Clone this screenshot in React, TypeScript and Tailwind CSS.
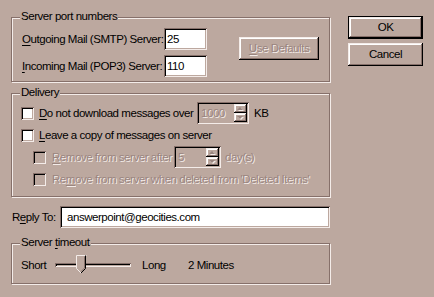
import React from 'react';

const FACE = 'bg-[#bca89f]';
const etched = 'border border-[#86706a] shadow-[inset_1px_1px_0_#f4ece9,1px_1px_0_#f4ece9]';
const sunken =
  'shadow-[inset_1px_1px_0_#86706a,inset_-1px_-1px_0_#f4ece9,inset_2px_2px_0_#000,inset_-2px_-2px_0_#bca89f]';
const raised =
  'shadow-[inset_-1px_-1px_0_#000,inset_1px_1px_0_#f4ece9,inset_-2px_-2px_0_#86706a,inset_2px_2px_0_#fff]';
const disabledText = 'text-[#9a857f] [text-shadow:1px_1px_0_#f4ece9]';

const U: React.FC<{ children: React.ReactNode }> = ({ children }) => <span className="underline underline-offset-2">{children}</span>;

const Group: React.FC<{ title: React.ReactNode; className?: string; children: React.ReactNode }> = ({
  title,
  className = '',
  children
}) => (
  <div className={`relative ${etched} ${className}`}>
    <span className={`absolute left-[8px] top-[-9px] px-[1px] leading-[15px] whitespace-nowrap ${FACE}`}>{title}</span>
    {children}
  </div>
);

const Checkbox: React.FC<{ disabled?: boolean }> = ({ disabled }) => (
  <div className={`w-[13px] h-[13px] shrink-0 ${sunken} ${disabled ? FACE : 'bg-white'}`} />
);

const Arrow: React.FC<{ up?: boolean }> = ({ up }) => (
  <svg width="7" height="4" viewBox="0 0 7 4" className="block">
    {up ? (
      <>
        <polygon points="3,0 6,3 0,3" fill="#f4ece9" transform="translate(1,1)" />
        <polygon points="3,0 6,3 0,3" fill="#9a857f" />
      </>
    ) : (
      <>
        <polygon points="0,0 6,0 3,3" fill="#f4ece9" transform="translate(1,1)" />
        <polygon points="0,0 6,0 3,3" fill="#9a857f" />
      </>
    )}
  </svg>
);

const Spin: React.FC<{ value: string; width: string }> = ({ value, width }) => (
  <div className={`relative h-[22px] ${width} ${FACE} ${sunken} flex items-center shrink-0`}>
    <span className={`pl-[4px] ${disabledText}`}>{value}</span>
    <div className="absolute right-[2px] top-[2px] flex flex-col">
      <div className={`w-[13px] h-[9px] ${FACE} ${raised} flex items-center justify-center`}>
        <Arrow up />
      </div>
      <div className={`w-[13px] h-[9px] ${FACE} ${raised} flex items-center justify-center`}>
        <Arrow />
      </div>
    </div>
  </div>
);

const Button: React.FC<{ children: React.ReactNode; isDefault?: boolean; disabled?: boolean; className?: string }> = ({
  children,
  isDefault,
  disabled,
  className = ''
}) => (
  <div
    className={`h-[23px] flex items-center justify-center ${FACE} ${raised} ${
      isDefault ? 'border border-black' : ''
    } ${disabled ? disabledText : ''} ${className}`}
  >
    {children}
  </div>
);

export default function App() {
  return (
    <div
      className={`w-[434px] h-[297px] ${FACE} text-black text-[11.5px] tracking-[-0.45px] leading-[15px] flex pl-[11px] overflow-hidden`}
      style={{ fontFamily: '"Liberation Sans", Arial, sans-serif' }}
    >
      {/* left column */}
      <div className="w-[319px] shrink-0 pt-[17px] flex flex-col">
        <Group title="Server port numbers" className="h-[65px]">
          <div className="flex pt-[10px] pl-[10px]">
            <div className="flex flex-col gap-[5px]">
              <div className="flex items-center h-[22px]">
                <span className="w-[142px] shrink-0 whitespace-nowrap"><U>O</U>utgoing Mail (SMTP) Server:</span>
                <div className={`w-[43px] h-[22px] bg-white ${sunken} flex items-center pl-[3px]`}>25</div>
              </div>
              <div className="flex items-center h-[22px]">
                <span className="w-[142px] shrink-0 whitespace-nowrap"><U>I</U>ncoming Mail (POP3) Server:</span>
                <div className={`w-[43px] h-[22px] bg-white ${sunken} flex items-center pl-[3px]`}>110</div>
              </div>
            </div>
            <Button disabled className="w-[80px] ml-[32px] mt-[9px]">
              <span className="whitespace-nowrap"><U>U</U>se Defaults</span>
            </Button>
          </div>
        </Group>

        <Group title="Delivery" className="h-[104px] mt-[11px]">
          <div className="flex flex-col pt-[8px] pl-[9px]">
            <div className="flex items-center h-[22px]">
              <Checkbox />
              <span className="ml-[5px] w-[158px] shrink-0 whitespace-nowrap"><U>D</U>o not download messages over</span>
              <Spin value="1000" width="w-[52px]" />
              <span className="ml-[5px]">KB</span>
            </div>
            <div className="flex items-center h-[22px]">
              <Checkbox />
              <span className="ml-[5px] whitespace-nowrap"><U>L</U>eave a copy of messages on server</span>
            </div>
            <div className="flex items-center h-[22px] pl-[12px]">
              <Checkbox disabled />
              <span className={`ml-[6px] w-[122px] shrink-0 whitespace-nowrap ${disabledText}`}><U>R</U>emove from server after</span>
              <Spin value="5" width="w-[47px]" />
              <span className={`ml-[4px] ${disabledText}`}>day(s)</span>
            </div>
            <div className="flex items-center h-[22px] pl-[12px]">
              <Checkbox disabled />
              <span className={`ml-[6px] whitespace-nowrap ${disabledText}`}>
                Re<U>m</U>ove from server when deleted from 'Deleted Items'
              </span>
            </div>
          </div>
        </Group>

        <div className="flex items-center h-[22px] mt-[9px]">
          <span className="w-[49px] shrink-0 pl-[1px] whitespace-nowrap">R<U>e</U>ply To:</span>
          <div className={`w-[270px] h-[22px] bg-white ${sunken} flex items-center pl-[7px]`}>answerpoint@geocities.com</div>
        </div>

        <Group
          title={
            <span>
              Server <U>t</U>imeout
            </span>
          }
          className="h-[41px] mt-[15px]"
        >
          <div className="flex items-center h-[22px] mt-[10px] pl-[9px]">
            <span className="w-[34px] shrink-0">Short</span>
            <div className="relative w-[76px] h-[4px] shrink-0">
              <div className={`w-full h-[4px] ${sunken} bg-[#bca89f]`} />
              <svg width="11" height="19" viewBox="0 0 11 19" className="absolute left-[21px] top-[-8px]">
                <polygon points="0,0 10,0 10,13 5,18 0,13" fill="#bca89f" />
                <polyline points="0,13 0,0 10,0" fill="none" stroke="#f4ece9" strokeWidth="1" transform="translate(0.5,0.5)" />
                <polyline points="9,0 9,13 4.5,17.5" fill="none" stroke="#000" strokeWidth="1" transform="translate(0.5,0.5)" />
                <polyline points="8,1 8,12.5 4.5,16" fill="none" stroke="#86706a" strokeWidth="1" transform="translate(0.5,0.5)" />
                <polyline points="0,13 4.5,17.5" fill="none" stroke="#f4ece9" strokeWidth="1" transform="translate(0.5,0.5)" />
              </svg>
            </div>
            <span className="ml-[11px] w-[46px] shrink-0">Long</span>
            <span className="whitespace-nowrap">2 Minutes</span>
          </div>
        </Group>
      </div>

      {/* right column */}
      <div className="ml-[18px] pt-[16px] flex flex-col gap-[4px]">
        <Button isDefault className="w-[75px]">OK</Button>
        <Button className="w-[75px]">Cancel</Button>
      </div>
    </div>
  );
}
